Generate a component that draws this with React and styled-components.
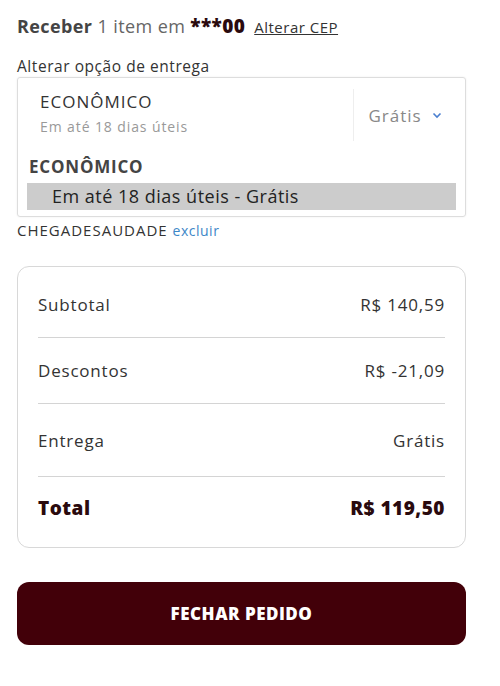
import React from "react";
import styled, { createGlobalStyle } from "styled-components";

const GlobalStyle = createGlobalStyle`
  *, *::before, *::after {
    box-sizing: border-box;
  }

  body {
    margin: 0;
    background: #fff;
    font-family: "Open Sans", "Liberation Sans", sans-serif;
    color: #333;
  }
`;

const rows = [
  { label: "Subtotal", value: "R$ 140,59", height: 66 },
  { label: "Descontos", value: "R$ -21,09", height: 66 },
  { label: "Entrega", value: "Grátis", height: 73 },
];

export default function App() {
  return (
    <>
      <GlobalStyle />
      <Page>
        <Heading>
          <strong>Receber</strong> 1 item em <Zip>***00</Zip>
          <ChangeLink href="#">Alterar CEP</ChangeLink>
        </Heading>

        <FieldLabel>Alterar opção de entrega</FieldLabel>
        <SelectBox>
          <SelectHead>
            <Option>
              <OptionName>ECONÔMICO</OptionName>
              <OptionSub>Em até 18 dias úteis</OptionSub>
            </Option>
            <Price>
              Grátis
              <svg width="10" height="7" viewBox="0 0 10 7">
                <path d="M1.5 1.5 5 5 8.5 1.5" fill="none" stroke="#4a7fd0" strokeWidth="1.6" />
              </svg>
            </Price>
          </SelectHead>
          <GroupTitle>ECONÔMICO</GroupTitle>
          <GroupItem>Em até 18 dias úteis - Grátis</GroupItem>
        </SelectBox>

        <Coupon>
          CHEGADESAUDADE <RemoveLink href="#">excluir</RemoveLink>
        </Coupon>

        <Summary>
          {rows.map((r) => (
            <Row key={r.label} height={r.height}>
              <span>{r.label}</span>
              <span>{r.value}</span>
            </Row>
          ))}
          <Row total height={62}>
            <span>Total</span>
            <span>R$ 119,50</span>
          </Row>
        </Summary>

        <CheckoutButton type="button">FECHAR PEDIDO</CheckoutButton>
      </Page>
    </>
  );
}

const Page = styled.div`
  width: 466px;
  padding: 14px 0 40px 17px;
  display: flex;
  flex-direction: column;
`;

const Heading = styled.div`
  font-size: 18px;
  letter-spacing: 0.4px;
  color: #666;
  line-height: 24px;
  white-space: nowrap;

  strong {
    color: #444;
    font-weight: 700;
  }
`;

const Zip = styled.span`
  font-weight: 800;
  font-size: 19px;
  color: #2a0a0e;
`;

const ChangeLink = styled.a`
  margin-left: 9px;
  font-size: 15px;
  letter-spacing: 0.5px;
  color: #333;
  text-decoration: underline;
`;

const FieldLabel = styled.div`
  margin-top: 17px;
  font-size: 15.5px;
  letter-spacing: 0.55px;
  color: #333;
  line-height: 20px;
`;

const SelectBox = styled.div`
  margin-top: 1px;
  border: 1px solid #ddd;
  border-radius: 3px;
  box-shadow: 0 0 2px rgba(0, 0, 0, 0.08);
  padding: 0 9px 6px 9px;
`;

const SelectHead = styled.div`
  display: flex;
  align-items: stretch;
  margin-top: 11px;
  height: 52px;
`;

const Option = styled.div`
  flex: 1;
  padding: 2px 0 0 13px;
  display: flex;
  flex-direction: column;
  gap: 5px;
`;

const OptionName = styled.div`
  font-size: 17px;
  letter-spacing: 1px;
  color: #333;
  line-height: 22px;
`;

const OptionSub = styled.div`
  font-size: 14px;
  letter-spacing: 0.9px;
  color: #999;
  line-height: 18px;
`;

const Price = styled.div`
  width: 103px;
  border-left: 1px solid #eee;
  display: flex;
  align-items: center;
  justify-content: center;
  gap: 10px;
  font-size: 17px;
  letter-spacing: 1px;
  color: #888;
`;

const GroupTitle = styled.div`
  margin-top: 15px;
  padding-left: 2px;
  font-size: 17px;
  letter-spacing: 0.8px;
  font-weight: 700;
  color: #444;
  line-height: 22px;
`;

const GroupItem = styled.div`
  margin-top: 5px;
  background: #cccccc;
  padding: 0 25px;
  font-size: 18px;
  letter-spacing: 0.5px;
  color: #222;
  line-height: 27px;
`;

const Coupon = styled.div`
  margin-top: 3px;
  font-size: 15px;
  letter-spacing: 1px;
  color: #333;
  line-height: 20px;
`;

const RemoveLink = styled.a`
  font-size: 14px;
  letter-spacing: 0.5px;
  color: #3d87c7;
  text-decoration: none;
`;

const Summary = styled.div`
  margin-top: 25px;
  border: 1px solid #d8d8d8;
  border-radius: 12px;
  padding: 5px 20px 8px;
`;

const Row = styled.div`
  display: flex;
  justify-content: space-between;
  align-items: center;
  height: ${({ height }) => height}px;
  font-size: ${({ total }) => (total ? "19px" : "17px")};
  letter-spacing: ${({ total }) => (total ? "0.5px" : "0.8px")};
  font-weight: ${({ total }) => (total ? 800 : 400)};
  color: ${({ total }) => (total ? "#2a0a0e" : "#333")};
  border-bottom: ${({ total }) => (total ? "none" : "1px solid #d4d4d4")};
`;

const CheckoutButton = styled.button`
  margin-top: 34px;
  height: 63px;
  border: none;
  border-radius: 12px;
  background: #420009;
  color: #fff;
  font-family: inherit;
  font-size: 17px;
  letter-spacing: 0.5px;
  font-weight: 800;
  cursor: pointer;
`;
